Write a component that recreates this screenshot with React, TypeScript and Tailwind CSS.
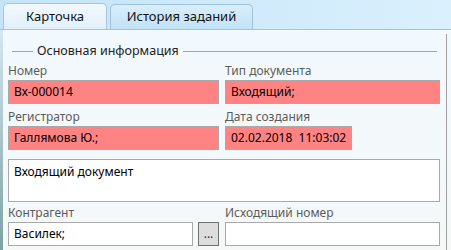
import React from "react"

function Field({ label, value, red, width }: { label: string; value?: string; red?: boolean; width?: string }) {
  return (
    <div className="flex flex-col">
      <div className="h-[18px] leading-[18px] text-[#5b5b5b]">{label}</div>
      <div
        className={`h-[24px] leading-[22px] border border-[#a9a9a9] px-[5px] text-black whitespace-pre ${red ? "bg-[#ff8383]" : "bg-white"} ${width ?? "w-full"}`}
      >
        {value}
      </div>
    </div>
  )
}

export default function App() {
  return (
    <div className="w-[451px] h-[250px] overflow-hidden flex flex-col bg-gradient-to-r from-[#c4e4f8] to-[#daf0fd] font-['Segoe_UI','Noto_Sans',sans-serif] text-[12px]">
      {/* tabs */}
      <div className="h-[29px] flex items-end pl-[3px] gap-[3px] shrink-0">
        <div className="h-[26px] w-[104px] flex items-center justify-center rounded-t-[5px] border border-b-0 border-[#a7c6da] bg-gradient-to-b from-[#f2f8fd] to-[#e2f0fa] text-[#111] text-[13px]">
          Карточка
        </div>
        <div className="h-[25px] w-[143px] flex items-center justify-center rounded-t-[5px] border border-b-0 border-[#9fc3da] bg-gradient-to-b from-[#d9eefb] to-[#c2e2f6] text-[#111] text-[13px]">
          История заданий
        </div>
      </div>

      {/* panel */}
      <div className="flex-1 flex border-t border-[#a8c2d2] bg-gradient-to-b from-[#f2f9fe] to-[#f5f8f7]">
        <div className="w-[3px] shrink-0 bg-gradient-to-b from-[#d4e7f2] to-[#7ea1a2]" />
        <div className="flex-1 flex">
          <div className="flex-1 flex flex-col pl-[5px] pr-[6px]">
            <div className="flex items-center h-[20px] mt-[11px] pl-[4px] pr-[3px] text-[#222] text-[12.5px]">
              <div className="w-[21px] h-px bg-[#a4a4a4]" />
              <span className="px-[4px]">Основная информация</span>
              <div className="flex-1 h-px bg-[#a4a4a4]" />
            </div>
            <div className="grid grid-cols-[211px_215px] gap-x-[6px] mt-[1px]">
              <Field label="Номер" value="Вх-000014" red />
              <Field label="Тип документа" value="Входящий;" red />
            </div>
            <div className="grid grid-cols-[211px_215px] gap-x-[6px] mt-[4px]">
              <Field label="Регистратор" value="Галлямова Ю.;" red />
              <Field label="Дата создания" value="02.02.2018  11:03:02" red width="w-[127px]" />
            </div>
            <div className="mt-[9px] h-[43px] w-[432px] border border-[#a9a9a9] bg-white px-[5px] py-[3px] text-black">
              Входящий документ
            </div>
            <div className="grid grid-cols-[211px_215px] gap-x-[6px] mt-[2px]">
              <div className="flex flex-col">
                <div className="h-[18px] leading-[18px] text-[#5b5b5b]">Контрагент</div>
                <div className="flex gap-[5px]">
                  <div className="h-[24px] flex-1 leading-[22px] border border-[#a9a9a9] bg-white px-[5px] text-black">Василек;</div>
                  <div className="h-[24px] w-[21px] border border-[#707070] bg-[#dddddd] flex items-center justify-center text-[#333] leading-none">
                    ...
                  </div>
                </div>
              </div>
              <Field label="Исходящий номер" />
            </div>
          </div>
          <div className="w-px mt-[4px] bg-[#a0a0a0] shrink-0" />
          <div className="w-[4px] shrink-0" />
        </div>
      </div>
    </div>
  )
}
